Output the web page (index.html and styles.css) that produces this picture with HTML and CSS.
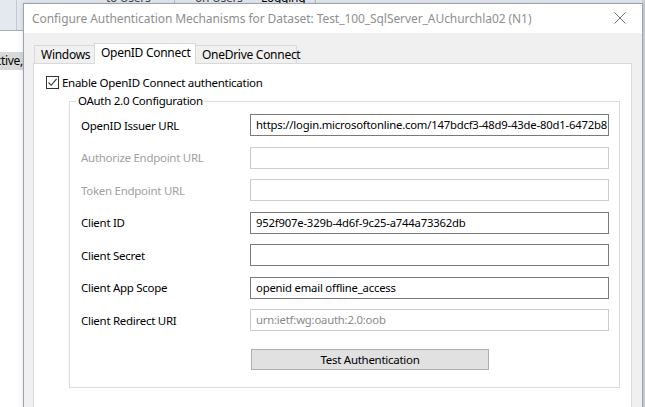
FILE: index.html
```html
<!DOCTYPE html>
<html>
<head>
<meta charset="utf-8">
<link rel="stylesheet" href="styles.css">
</head>
<body>
<div class="desk">
  <div class="app">
    <div class="app-top">
      <div class="app-side"></div>
      <div class="app-heads">
        <span class="h h1">to Users</span>
        <span class="sep"></span>
        <span class="h h2">on Users</span>
        <span class="h h3">Logging</span>
        <span class="sep"></span>
      </div>
    </div>
    <div class="app-body">
      <div class="app-row"><span>Inactive,</span></div>
    </div>
  </div>
  <div class="scroll-strip"></div>

  <div class="dialog">
    <div class="titlebar">
      <span class="title">Configure Authentication Mechanisms for Dataset: Test_100_SqlServer_AUchurchla02 (N1)</span>
      <svg class="close" width="12" height="12" viewBox="0 0 12 12"><path d="M0.5 0.5 L11.5 11.5 M11.5 0.5 L0.5 11.5" stroke="#6e6e6e" stroke-width="1" fill="none"/></svg>
    </div>
    <div class="client">
      <div class="tabs">
        <div class="tab">Windows</div>
        <div class="tab active">OpenID Connect</div>
        <div class="tab">OneDrive Connect</div>
      </div>
      <div class="panel">
        <label class="check">
          <span class="box"><svg width="11" height="11" viewBox="0 0 11 11"><path d="M1.5 5.5 L4.2 8.3 L9.6 1.8" stroke="#333" stroke-width="1.1" fill="none"/></svg></span>
          <span>Enable OpenID Connect authentication</span>
        </label>
        <fieldset class="group">
          <legend>OAuth 2.0 Configuration</legend>
          <div class="rows">
            <div class="row"><span class="lbl">OpenID Issuer URL</span><span class="field">https://login.microsoftonline.com/147bdcf3-48d9-43de-80d1-6472b8</span></div>
            <div class="row off"><span class="lbl">Authorize Endpoint URL</span><span class="field"></span></div>
            <div class="row off"><span class="lbl">Token Endpoint URL</span><span class="field"></span></div>
            <div class="row"><span class="lbl">Client ID</span><span class="field">952f907e-329b-4d6f-9c25-a744a73362db</span></div>
            <div class="row"><span class="lbl">Client Secret</span><span class="field"></span></div>
            <div class="row"><span class="lbl">Client App Scope</span><span class="field">openid email offline_access</span></div>
            <div class="row ro"><span class="lbl">Client Redirect URI</span><span class="field">urn:ietf:wg:oauth:2.0:oob</span></div>
          </div>
          <div class="btnrow"><span class="button">Test Authentication</span></div>
        </fieldset>
      </div>
    </div>
  </div>
</div>
</body>
</html>
```

FILE: styles.css
```css
* { box-sizing: border-box; }
html, body { margin: 0; padding: 0; }
body {
  width: 645px;
  height: 407px;
  overflow: hidden;
  background: #ffffff;
  font-family: "Noto Sans", "Open Sans", sans-serif;
  font-size: 11.5px;
  letter-spacing: -0.28px;
  color: #000;
}
.desk { position: relative; width: 645px; height: 407px; overflow: hidden; }

.app { display: flex; flex-direction: column; height: 100%; }
.app-top {
  height: 31px;
  background: #e4e9f0;
  border-bottom: 1px solid #a7adb5;
  display: flex;
}
.app-side { width: 17px; border-right: 1px solid #c3c8cf; }
.app-heads { display: flex; align-items: flex-start; height: 4px; overflow: hidden; }
.h { font-size: 12px; color: #444; line-height: 12px; margin-top: -8px; white-space: nowrap; }
.h1 { margin-left: 89px; width: 51px; }
.h2 { margin-left: 20px; width: 50px; }
.h3 { margin-left: 16px; width: 37px; color: #000; }
.sep { width: 1px; height: 4px; background: #b8bec6; margin-left: 17px; }
.app-body { flex: 1; padding-top: 21px; }
.app-row {
  height: 18px;
  background: #d9d9d9;
  width: 24px;
  line-height: 18px;
  font-size: 12px;
  display: flex;
  justify-content: flex-end;
  white-space: nowrap;
  overflow: hidden;
  padding-right: 1px;
}
.app-row span { flex-shrink: 0; }
.scroll-strip {
  position: absolute; right: 0; top: 0; width: 3px; height: 407px;
  background: #cfd2d6;
}

.dialog {
  position: absolute;
  left: 23px;
  top: 3px;
  width: 620px;
  height: 420px;
  background: #f0f0f0;
  border: 1px solid #9aa3ad;
  box-shadow: 0 0 6px rgba(0,0,0,0.12);
  display: flex;
  flex-direction: column;
}
.titlebar {
  height: 29px;
  background: #ffffff;
  display: flex;
  align-items: center;
  justify-content: space-between;
  padding: 0 16px 0 8px;
  flex-shrink: 0;
}
.title { color: #8f8f8f; font-size: 12px; letter-spacing: -0.07px; white-space: nowrap; }
.close { display: block; margin-top: -1px; }

.client { padding: 10px 10px 0 9px; flex: 1; display: flex; flex-direction: column; }
.tabs { display: flex; height: 20px; align-items: flex-end; padding-left: 1px; position: relative; z-index: 1; }
.tab {
  height: 18px;
  padding: 0 6px;
  border: 1px solid #d9d9d9;
  border-bottom: none;
  background: #f0f0f0;
  line-height: 17px;
  margin-right: -1px;
  white-space: nowrap;
  font-size: 12px;
}
.tab:first-child { width: 61px; }
.tab:nth-child(2) { width: 102px; }
.tab:nth-child(3) { width: 102px; }
.tab.active {
  height: 21px;
  background: #ffffff;
  line-height: 18px;
  margin-bottom: -1px;
  position: relative;
  z-index: 2;
}
.panel {
  flex: 1;
  background: #ffffff;
  border: 1px solid #d9d9d9;
  padding: 12px 11px 0 12px;
}
.check { display: flex; align-items: center; height: 13px; gap: 3px; }
.box {
  width: 13px; height: 13px;
  border: 1px solid #333;
  background: #fff;
  display: flex; align-items: center; justify-content: center;
}
.box svg { display: block; }

.group {
  margin: 5px 0 0 23px;
  width: 551px;
  height: 294px;
  border: 1px solid #dcdcdc;
  padding: 6px 10px 0 11px;
}
.group legend { padding: 0 2px; margin-left: -5px; line-height: 14px; }
.rows { display: flex; flex-direction: column; gap: 10.5px; }
.row { display: flex; align-items: center; height: 22px; }
.lbl { width: 169px; white-space: nowrap; }
.field {
  width: 359px;
  height: 22px;
  border: 1px solid #7a7a7a;
  padding: 0 5px;
  line-height: 20px;
  font-size: 11.3px;
  letter-spacing: -0.2px;
  white-space: nowrap;
  overflow: hidden;
  background: #fff;
}
.row.off .lbl { color: #a0a0a0; }
.row.off .field { border-color: #cccccc; }
.row.ro .field { border-color: #cccccc; color: #8a8a8a; }
.btnrow { padding: 18px 0 0 170px; }
.button {
  display: block;
  width: 238px;
  height: 21px;
  background: #e1e1e1;
  border: 1px solid #adadad;
  text-align: center;
  line-height: 19px;
}
```
